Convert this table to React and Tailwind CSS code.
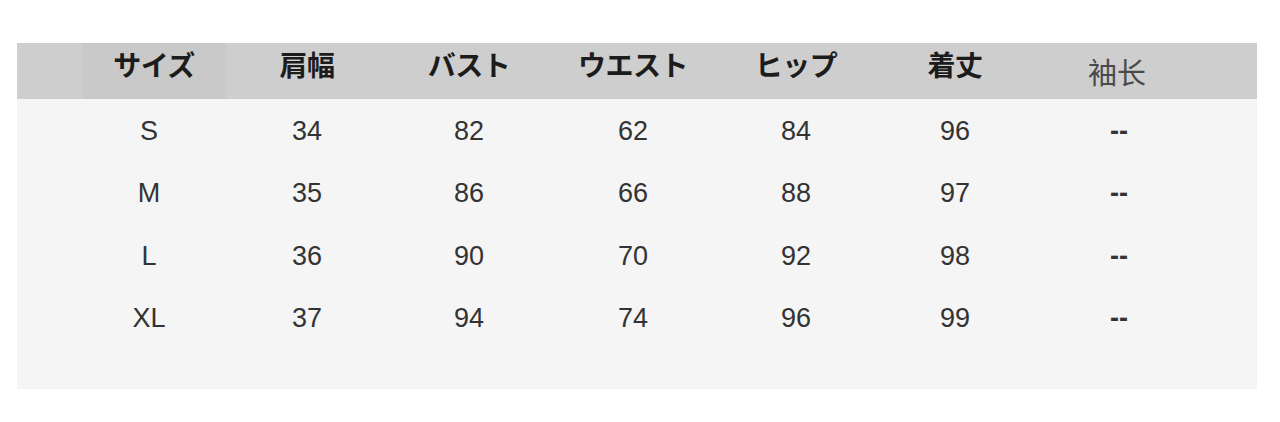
import React from "react";

const cols = ["w-[144px]", "w-[162px]", "w-[162px]", "w-[166px]", "w-[160px]", "w-[158px]", "w-[166px]"];

const headers = ["サイズ", "肩幅", "バスト", "ウエスト", "ヒップ", "着丈"];

const rows = [
    ["S", "34", "82", "62", "84", "96", "--"],
    ["M", "35", "86", "66", "88", "97", "--"],
    ["L", "36", "90", "70", "92", "98", "--"],
    ["XL", "37", "94", "74", "96", "99", "--"],
];

export default function App() {
    return (
        <div className="w-[1280px] h-[422px] bg-white pt-[43px] pl-[17px]">
            <div className="w-[1240px] bg-[#f5f5f5] pb-[39px]">
                {/* header */}
                <div className="flex h-[56px] bg-[#cecece] pl-[65px]">
                    {headers.map((h, i) => (
                        <div
                            key={h}
                            className={`${cols[i]} ${i === 0 ? "bg-[#c9c9c9]" : ""} flex justify-center pt-[1px] text-[28px] leading-[40px] font-bold text-[#1c1c1c] tracking-[-0.5px]`}
                            style={{ fontFamily: '"Noto Sans CJK JP", sans-serif' }}
                        >
                            {h}
                        </div>
                    ))}
                    <div
                        className={`${cols[6]} flex items-center justify-center pt-[2px] text-[29px] text-[#4a4a4a]`}
                        style={{ fontFamily: '"Noto Sans CJK SC", sans-serif' }}
                    >
                        袖长
                    </div>
                </div>

                {/* body */}
                <div className="pl-[65px] pt-[1px]">
                    {rows.map((row) => (
                        <div key={row[0]} className="flex h-[62.4px] items-center">
                            {row.map((v, i) => (
                                <div
                                    key={i}
                                    className={`${cols[i]} text-center text-[27px] text-[#333333] ${i === 0 ? "pr-[10px]" : ""} ${i === 6 ? "pl-[4px] font-semibold text-[#3a3a3a]" : ""}`}
                                    style={{ fontFamily: '"Liberation Sans", Arial, sans-serif' }}
                                >
                                    {v}
                                </div>
                            ))}
                        </div>
                    ))}
                </div>
            </div>
        </div>
    );
}
